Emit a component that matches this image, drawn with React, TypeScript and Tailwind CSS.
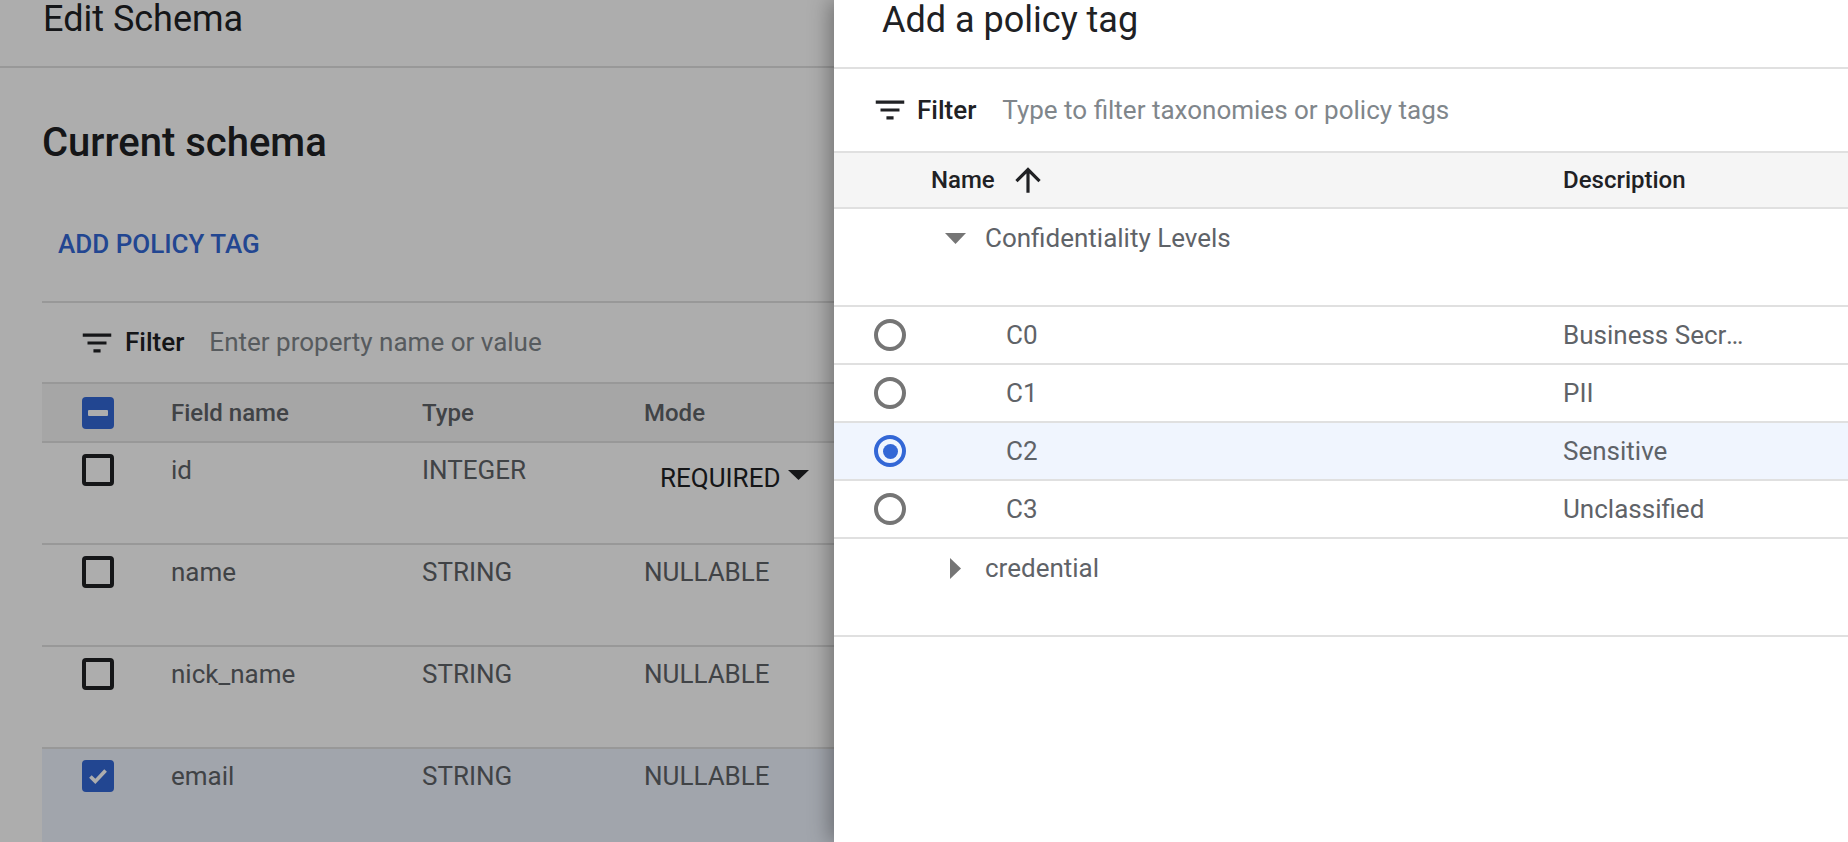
import React from 'react';

type Field = { name: string; type: string; mode: string; checked: boolean; editable?: boolean };

const fields: Field[] = [
  { name: 'id', type: 'INTEGER', mode: 'REQUIRED', checked: false, editable: true },
  { name: 'name', type: 'STRING', mode: 'NULLABLE', checked: false },
  { name: 'nick_name', type: 'STRING', mode: 'NULLABLE', checked: false },
  { name: 'email', type: 'STRING', mode: 'NULLABLE', checked: true },
];

const tags = [
  { name: 'C0', description: 'Business Secrets' },
  { name: 'C1', description: 'PII' },
  { name: 'C2', description: 'Sensitive', selected: true },
  { name: 'C3', description: 'Unclassified' },
];

const FilterIcon = () => (
  <svg viewBox="0 0 24 24" className="w-[38px] h-[38px] shrink-0" fill="#202124">
    <path d="M3 6h18v2H3z M6 11h12v2H6z M9.75 16h4.5v2h-4.5z" />
  </svg>
);

const ArrowUp = () => (
  <svg viewBox="0 0 24 24" className="w-[38px] h-[38px] shrink-0" fill="#202124">
    <path d="M4 12l1.41 1.41L11 7.83V20h2V7.83l5.58 5.59L20 12l-8-8-8 8z" />
  </svg>
);

const Checkbox = ({ state }: { state: 'off' | 'on' | 'mixed' }) => {
  if (state === 'off') {
    return <span className="block w-[32px] h-[32px] shrink-0 rounded-[4px] border-[4px] border-[#202124]" />;
  }
  return (
    <span className="flex w-[32px] h-[32px] shrink-0 rounded-[4px] bg-[#3367d6] items-center justify-center">
      {state === 'mixed' ? (
        <span className="block w-[20px] h-[6px] bg-white rounded-[1px]" />
      ) : (
        <svg viewBox="0 0 24 24" className="w-[26px] h-[26px]">
          <polyline points="5,12.5 9.5,17 19,7" fill="none" stroke="#fff" strokeWidth="3.4" />
        </svg>
      )}
    </span>
  );
};

const Radio = ({ on }: { on?: boolean }) => (
  <span
    className={`flex w-[32px] h-[32px] shrink-0 rounded-full border-[4px] items-center justify-center ${
      on ? 'border-[#3367d6]' : 'border-[#757575]'
    }`}
  >
    {on && <span className="block w-[15px] h-[15px] rounded-full bg-[#3367d6]" />}
  </span>
);

const TreeRow = ({ label, open }: { label: string; open: boolean }) => (
  <div className="h-[98px] border-b-2 border-[#e0e0e0] pt-[13px] pl-[100px] flex items-start">
    <span className="flex w-[42px] h-[32px] items-center justify-center">
      {open ? (
        <svg width="21" height="11" viewBox="0 0 21 11">
          <polygon points="0,0 21,0 10.5,11" fill="#757575" />
        </svg>
      ) : (
        <svg width="11" height="21" viewBox="0 0 11 21">
          <polygon points="0,0 11,10.5 0,21" fill="#757575" />
        </svg>
      )}
    </span>
    <span className="ml-[9px] text-[26px] leading-[32px] text-[#5f6368]">{label}</span>
  </div>
);

export default function App() {
  return (
    <div className="relative w-[1848px] h-[842px] overflow-hidden bg-white font-['Roboto',sans-serif]">
      {/* page under the drawer */}
      <div>
        <div className="h-[68px] border-b-2 border-[#e0e0e0] pl-[43px]">
          <h1 className="text-[36px] leading-[38px] text-[#202124]">Edit Schema</h1>
        </div>
        <div className="pl-[42px]">
          <h2 className="mt-[52px] text-[40px] leading-[46px] font-medium text-[#202124]">Current schema</h2>
          <button className="block mt-[62px] pl-[16px] text-[26px] leading-[32px] font-medium text-[#3367d6]">
            ADD POLICY TAG
          </button>

          <div className="mt-[41px] border-t-2 border-[#e0e0e0]">
            <div className="h-[79px] flex items-center pl-[36px]">
              <FilterIcon />
              <span className="ml-[9px] text-[26px] font-medium text-[#202124]">Filter</span>
              <span className="ml-[25px] text-[26px] text-[#80868b]">Enter property name or value</span>
            </div>

            <div className="h-[61px] border-y-2 border-[#e0e0e0] bg-[#f5f5f5] flex items-center text-[24px] font-medium text-[#5f6368]">
              <div className="w-[129px] pl-[40px]">
                <Checkbox state="mixed" />
              </div>
              <div className="w-[251px]">Field name</div>
              <div className="w-[222px]">Type</div>
              <div>Mode</div>
            </div>

            {fields.map((f) => (
              <div
                key={f.name}
                className={`flex items-start pt-[11px] text-[26px] leading-[32px] text-[#5f6368] ${
                  f.checked ? 'h-[120px] bg-[#eef3fe]' : 'h-[102px] border-b-2 border-[#e0e0e0]'
                }`}
              >
                <div className="w-[129px] pl-[40px]">
                  <Checkbox state={f.checked ? 'on' : 'off'} />
                </div>
                <div className="w-[251px]">{f.name}</div>
                <div className="w-[222px]">{f.type}</div>
                {f.editable ? (
                  <div className="mt-[8px] ml-[16px] flex items-start text-[#202124]">
                    {f.mode}
                    <svg width="21" height="10" viewBox="0 0 21 10" className="ml-[8px] mt-[8px]">
                      <polygon points="0,0 21,0 10.5,10" fill="#202124" />
                    </svg>
                  </div>
                ) : (
                  <div>{f.mode}</div>
                )}
              </div>
            ))}
          </div>
        </div>
      </div>

      {/* scrim */}
      <div className="absolute inset-0 bg-black/[0.32]" />

      {/* drawer */}
      <div className="absolute top-0 right-0 bottom-0 w-[1014px] bg-white shadow-[-4px_0_20px_rgba(0,0,0,0.35)]">
        <div className="h-[69px] border-b-2 border-[#e0e0e0] pl-[48px] pt-[1px]">
          <h2 className="text-[36px] leading-[38px] text-[#202124]">Add a policy tag</h2>
        </div>

        <div className="h-[82px] flex items-center pl-[37px]">
          <FilterIcon />
          <span className="ml-[8px] text-[26px] font-medium text-[#202124]">Filter</span>
          <span className="ml-[26px] text-[26px] text-[#80868b]">Type to filter taxonomies or policy tags</span>
        </div>

        <div className="h-[58px] border-y-2 border-[#e0e0e0] bg-[#f5f5f5] flex items-center text-[24px] font-medium text-[#202124]">
          <div className="w-[97px]" />
          <div className="w-[632px] flex items-center">
            Name
            <span className="ml-[14px]">
              <ArrowUp />
            </span>
          </div>
          <div>Description</div>
        </div>

        <TreeRow label="Confidentiality Levels" open />

        {tags.map((t) => (
          <div
            key={t.name}
            className={`h-[58px] border-b-2 border-[#e0e0e0] flex items-center text-[26px] text-[#5f6368] ${
              t.selected ? 'bg-[#f0f5fe]' : ''
            }`}
          >
            <div className="w-[172px] pl-[40px]">
              <Radio on={t.selected} />
            </div>
            <div className="w-[557px]">{t.name}</div>
            <div className="w-[186px] truncate">{t.description}</div>
          </div>
        ))}

        <TreeRow label="credential" open={false} />
      </div>
    </div>
  );
}
